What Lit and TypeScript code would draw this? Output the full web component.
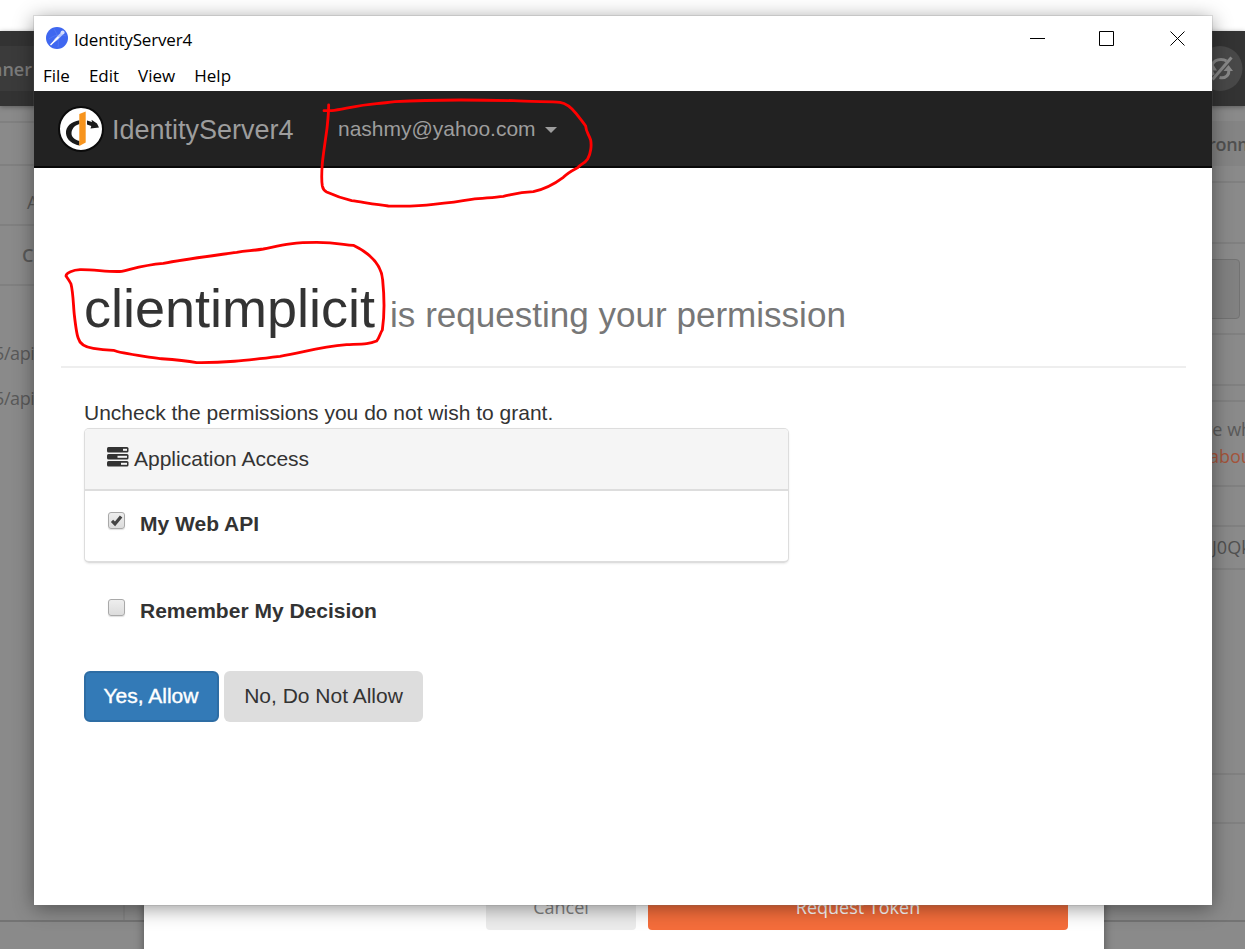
import { LitElement, html, css, svg } from "lit";
import { customElement, property } from "lit/decorators.js";

/* Dimmed application that sits behind the consent window. */
@customElement("backdrop-app")
class BackdropApp extends LitElement {
  static styles = css`
    :host { display: flex; flex-direction: column; height: 949px; isolation: isolate; background: #fff; font: 18px/24px "Open Sans", sans-serif; color: #595959; overflow: hidden; }
    .top { height: 75px; margin-top: 31px; flex: none; display: flex; justify-content: space-between; background: #333; position: relative; z-index: 1; box-shadow: 0 1px 5px rgba(0,0,0,.35); }
    .runner { align-self: center; width: 40px; height: 45px; background: #3b3b3b; color: #7b7b7b; font-weight: 600; line-height: 46px; text-indent: -9px; }
    .sync { align-self: center; width: 47px; height: 45px; display: block; }
    .main { flex: 1; display: flex; background: #8a8a8a; min-height: 0; }
    .left { width: 123px; display: flex; flex-direction: column; border-right: 2px solid #828282; }
    .row { box-sizing: border-box; flex: none; border-bottom: 2px solid #808080; white-space: nowrap; overflow: hidden; }
    .l1 { height: 17px; } .l2 { height: 43px; } .l3 { height: 60px; padding: 24px 0 0 27px; } .l4 { height: 60px; padding: 17px 0 0 22px; font-weight: 600; }
    .url { height: 45px; line-height: 45px; text-indent: -6px; letter-spacing: -.4px; white-space: nowrap; }
    .urls { padding-top: 45px; }
    .right { margin-left: auto; width: 45px; display: flex; flex-direction: column; }
    .r1 { height: 15px; border: 0; } .r2 { height: 45px; border: 0; background: #848484; padding: 11px 0 0 8px; color: #505050; font-weight: 600; letter-spacing: -.3px; }
    .r3 { height: 17px; } .r4 { height: 61px; } .r5 { height: 91px; padding: 15px 5px 0 0; }
    .box { box-sizing: border-box; height: 60px; border: 1px solid #727272; border-radius: 4px; background: #818181; }
    .r6 { height: 51px; } .r7 { height: 16px; } .r8 { height: 85px; padding: 14px 0 0 5px; line-height: 27px; }
    .r9 { height: 40px; } .r10 { height: 43px; padding: 8px 0 0 12px; color: #505050; } .r11 { height: 205px; } .r12 { height: 49px; }
    .link { color: #a4543a; padding-left: 4px; }
    .foot { height: 29px; margin-top: -1px; box-sizing: border-box; border-top: 2px solid #737373; background: #8a8a8a; flex: none; }
  `;
  render() {
    return html`
      <div class="top">
        <div class="runner">nner</div>
        <svg class="sync" viewBox="1198 46 47 45">
          <circle cx="1220" cy="68.5" r="22.5" fill="#484848" />
          <g fill="none" stroke="#888" stroke-width="3">
            <path d="M1213.5 75 C1209 68 1212 59.500 1221 59.500 C1223 59.500 1225 60 1226.500 61" />
            <path d="M1228.500 69 C1230 75 1225 79 1219.500 77.500" />
            <path d="M1231.500 57.500 L1212.500 79.500" />
          </g>
          <path d="M1208 70.500 L1217 70.500 L1213 64 Z M1223.500 71 L1233 71 L1228.500 65 Z" fill="#888" />
        </svg>
      </div>
      <div class="main">
        <div class="left">
          <div class="row l1"></div><div class="row l2"></div>
          <div class="row l3">A</div><div class="row l4">C</div>
          <div class="urls"><div class="url">5/api</div><div class="url">5/api</div></div>
        </div>
        <div class="right">
          <div class="row r1"></div><div class="row r2">ronm</div><div class="row r3"></div>
          <div class="row r4"></div><div class="row r5"><div class="box"></div></div>
          <div class="row r6"></div><div class="row r7"></div>
          <div class="row r8">re wh<br /><span class="link">abou</span></div>
          <div class="row r9"></div><div class="row r10">J0Qk</div>
          <div class="row r11"></div><div class="row r12"></div>
        </div>
      </div>
      <div class="foot"></div>
    `;
  }
}

/* Bottom edge of the token dialog. */
@customElement("token-dialog")
class TokenDialog extends LitElement {
  static styles = css`
    :host { box-sizing: border-box; display: flex; justify-content: flex-end; align-items: flex-start; gap: 12px; padding: 8px 36px 0; background: #fff; box-shadow: 0 0 9px rgba(0,0,0,.4); font: 18px/24px "Open Sans", sans-serif; }
    .btn { box-sizing: border-box; height: 62px; padding-top: 27px; line-height: 24px; text-align: center; border-radius: 4px; }
    .cancel { width: 150px; background: #ececec; color: #808080; }
    .request { width: 420px; background: #f56d3b; color: #fff; }
  `;
  render() {
    return html`<div class="btn cancel">Cancel</div><div class="btn request">Request Token</div>`;
  }
}

@customElement("check-row")
class CheckRow extends LitElement {
  @property() label = "";
  @property({ type: Boolean }) checked = false;
  static styles = css`
    :host { display: flex; align-items: flex-start; gap: 15px; font: bold 21px/30px "Liberation Sans", Arial, sans-serif; color: #333; }
    .box { box-sizing: border-box; width: 17px; height: 17px; margin-top: 4px; border: 1.5px solid #a9a9a9; border-radius: 3px; background: linear-gradient(#eee, #dcdcdc); box-shadow: 0 1px 1px rgba(0,0,0,.13); display: flex; }
    .text { margin-top: 1px; }
    svg { width: 15px; height: 15px; overflow: visible; }
  `;
  render() {
    return html`<span class="box">${this.checked
        ? html`<svg viewBox="0 0 14 14"><path d="M2.800 7.300 L5.600 10.200 L11.300 3.200" fill="none" stroke="#444" stroke-width="3" /></svg>`
        : null}</span><span class="text">${this.label}</span>`;
  }
}

@customElement("consent-window")
class ConsentWindow extends LitElement {
  static styles = css`
    :host { display: flex; flex-direction: column; background: #fff; font: 21px/30px "Liberation Sans", Arial, sans-serif; color: #333; box-shadow: 0 0 0 1px rgba(110,110,110,.17), 0 3px 19px rgba(0,0,0,.42); }
    .title { height: 46px; display: flex; align-items: center; padding-left: 12px; font: 17px/24px "Open Sans", sans-serif; letter-spacing: -.17px; color: #000; }
    .app { width: 22px; height: 22px; margin: -2px 6px 0 0; }
    .name { flex: 1; padding-top: 2px; }
    .controls { width: 156px; height: 16px; margin: -2px 26px 0 0; }
    .menu { box-sizing: border-box; height: 29px; padding: 0 0 2px 9px; display: flex; align-items: center; gap: 19px; font: 17px/24px "Open Sans", sans-serif; color: #000; }
    .nav { box-sizing: border-box; height: 77px; background: #222; border-bottom: 2px solid #080808; display: flex; align-items: center; padding-left: 24px; color: #9d9d9d; }
    .logo { width: 46px; height: 46px; margin-right: 8px; }
    .brand { font-size: 27px; width: 226px; padding-top: 2px; }
    .caret { width: 0; height: 0; border: 6px solid transparent; border-top-color: #9d9d9d; border-bottom: 0; margin-left: 9px; margin-top: 2px; }
    .head { box-sizing: border-box; height: 200px; margin: 0 26px 0 27px; border-bottom: 2px solid #eee; padding: 110px 0 0 23px; font-size: 54px; line-height: 60px; font-weight: 400; white-space: nowrap; }
    .small { font-size: 35.05px; color: #777; }
    .body { padding: 30px 0 0 50px; }
    .panel { box-sizing: border-box; width: 705px; height: 135px; border: 1.500px solid #ddd; border-bottom-width: 2px; border-radius: 5px; box-shadow: 0 1px 2px rgba(0,0,0,.08); overflow: hidden; }
    .ph { box-sizing: border-box; height: 62px; background: #f5f5f5; border-bottom: 2px solid #ddd; padding: 15px 0 0 22px; display: flex; gap: 5px; }
    .srv { width: 22px; height: 20px; margin-top: 3px; }
    .scope { padding: 17px 0 0 23px; }
    .remember { padding: 32px 0 0 24px; }
    .actions { display: flex; gap: 5px; padding-top: 45px; }
    .btn { box-sizing: border-box; height: 51px; border-radius: 6px; line-height: 49px; text-align: center; }
    .yes { width: 135px; background: #337ab7; border: 2px solid #2e6da4; color: #fff; line-height: 46px; text-indent: -1px; -webkit-text-stroke: .4px #fff; }
    .no { width: 199px; background: #ddd; }
  `;
  render() {
    return html`
      <div class="title">
        <svg class="app" viewBox="0 0 22 22">
          <circle cx="11" cy="11" r="11" fill="#3f67f0" />
          <path d="M3 12 C8 8 14 7 20 9 M8 2 C12 8 13 14 12 20" fill="none" stroke="#5d80f4" stroke-width=".6" />
          <path d="M5 17.500 L9 11.500 L15 5.500 L17 7.500 L11.500 13 Z" fill="#b9c8fc" />
          <path d="M4.500 18 L12.500 10" stroke="#fff" stroke-width="1.400" />
          <circle cx="16.600" cy="5.400" r="2" fill="#d5defd" />
        </svg>
        <span class="name">IdentityServer4</span>
        <svg class="controls" viewBox="0 0 156 16" fill="none" stroke="#000">
          <path d="M0 8.500 H15 M69.500 1.500 H83.500 V15.500 H69.500 Z M140.500 1.500 L154.500 15.500 M154.500 1.500 L140.500 15.500" />
        </svg>
      </div>
      <div class="menu"><span>File</span><span>Edit</span><span>View</span><span>Help</span></div>
      <div class="nav">
        <svg class="logo" viewBox="58 106 46 46">
          <circle cx="81" cy="129" r="22" fill="#fff" stroke="#0b0b0b" stroke-width="2" />
          <path d="M79.500 120.300 C71 121.500 65.500 127 66 133.500 C66.500 140 73 144.500 79.500 145.500 L79.500 141 C74.500 139.500 71.500 137 71.500 133.500 C71.500 129.500 74 125.500 79.500 124 Z" fill="#1a1a1a" />
          <path d="M87 120.500 L92 122 L91.500 119.800 L97 123.500 L99 127.500 L90.500 128.500 L91.300 126 L87 124.500 Z" fill="#1a1a1a" />
          <path d="M79.300 114 L85.700 111.500 V142.500 L79.300 146 Z" fill="#f7941d" />
        </svg>
        <span class="brand">IdentityServer4</span><span>nashmy@yahoo.com</span><span class="caret"></span>
      </div>
      <div class="head">clientimplicit <span class="small">is requesting your permission</span></div>
      <div class="body">
        <div>Uncheck the permissions you do not wish to grant.</div>
        <div class="panel">
          <div class="ph">
            <svg class="srv" viewBox="0 0 22 20">
              <g fill="#333">
                <rect width="21.500" height="5.500" rx="1.500" /><rect y="7" width="21.500" height="5.500" rx="1.500" /><rect y="14" width="21.500" height="5.500" rx="1.500" />
              </g>
              <g fill="#f5f5f5">
                <rect x="16" y="1.800" width="4" height="2" /><rect x="10.500" y="8.800" width="9.500" height="2" /><rect x="14" y="15.800" width="6" height="2" />
              </g>
            </svg>
            <span>Application Access</span>
          </div>
          <check-row class="scope" label="My Web API" checked></check-row>
        </div>
        <check-row class="remember" label="Remember My Decision"></check-row>
        <div class="actions"><div class="btn yes">Yes, Allow</div><div class="btn no">No, Do Not Allow</div></div>
      </div>
    `;
  }
}

const strokes = [
  { at: "translate(300 80) scale(.33333)", d: "M86 75 C86 100 84 115 81 145 C75 190 70 220 67 250 C65 275 64 300 67 318 C69 328 72 332 80 336 C100 345 125 355 155 362 C190 367 230 374 265 378 C310 379 365 378 400 373 C440 369 480 364 515 358 C550 354 580 353 610 349 C640 343 655 337 700 335 C735 327 770 307 790 292 C805 277 820 270 833 263 C838 255 855 250 863 237 C873 220 875 195 872 180 C866 162 858 155 857 138 C848 125 840 115 828 100 C820 90 800 70 780 67 C750 64 690 66 640 62 C560 60 400 58 285 65 C260 67 250 70 230 71 C170 76 130 88 95 92 L72 92" },
  { at: "translate(50 230) scale(.33333)", d: "M48 138 C55 148 60 155 63 162 C70 190 70 230 73 255 C77 290 80 315 85 325 C90 345 110 352 130 355 C155 359 170 360 190 361 C210 370 250 374 330 386 C380 389 400 390 440 398 C520 399 580 392 690 379 C760 368 800 352 890 344 C940 342 955 343 980 333 C988 325 990 310 997 300 C1003 260 1003 200 998 150 C995 110 970 75 910 46 C880 44 860 38 800 37 C720 37 690 47 640 57 C610 62 590 62 560 67 C480 78 400 88 340 100 C280 105 250 116 215 124 C180 127 130 118 90 119 C70 120 48 128 48 138 Z" },
];

@customElement("app-root")
class AppRoot extends LitElement {
  static styles = css`
    :host { display: block; position: relative; width: 1245px; height: 949px; overflow: hidden; }
    .dialog { position: absolute; left: 144px; top: 860px; width: 960px; height: 100px; }
    .window { position: absolute; left: 34px; top: 16px; width: 1178px; height: 889px; }
    .ink { position: absolute; inset: 0; width: 1245px; height: 949px; pointer-events: none; }
  `;
  render() {
    return html`
      <backdrop-app></backdrop-app>
      <token-dialog class="dialog"></token-dialog>
      <consent-window class="window"></consent-window>
      <svg class="ink" viewBox="0 0 1245 949" fill="none" stroke="#f00" stroke-width="8.500" stroke-linecap="round" stroke-linejoin="round">
        ${strokes.map((s) => svg`<path transform=${s.at} d=${s.d} />`)}
      </svg>
    `;
  }
}
